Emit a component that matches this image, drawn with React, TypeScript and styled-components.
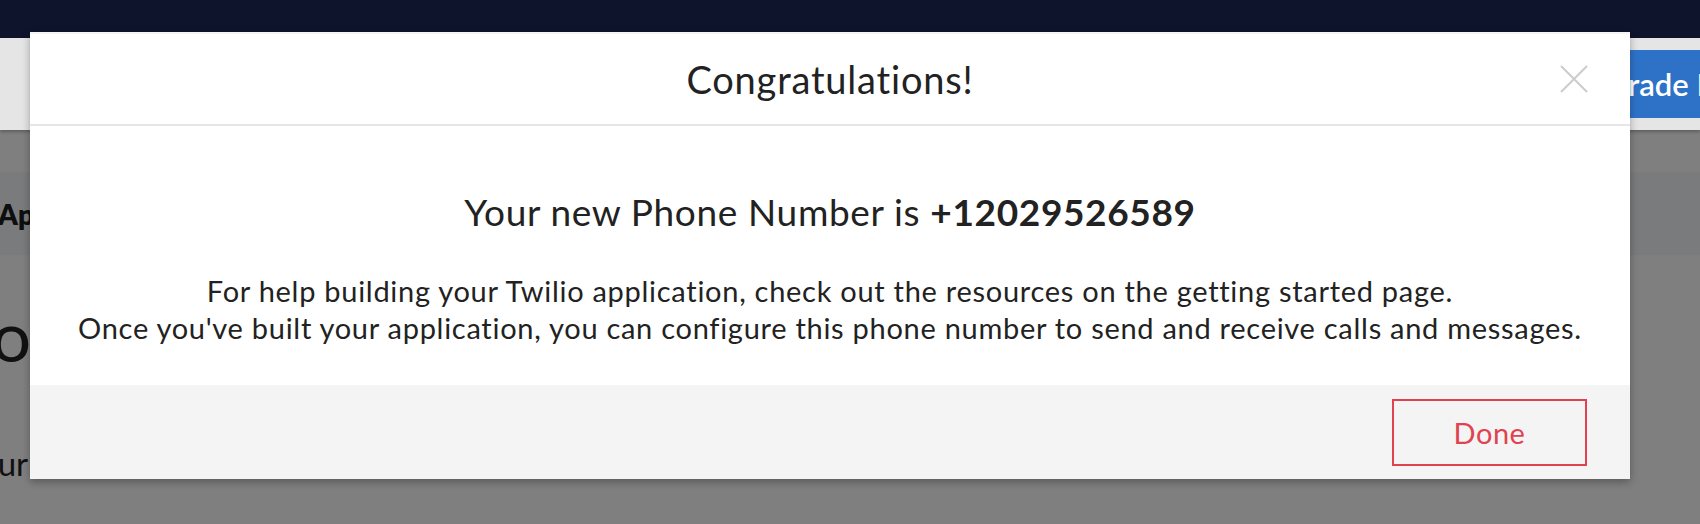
import React from "react";
import styled, { createGlobalStyle } from "styled-components";

const GlobalStyle = createGlobalStyle`
  html, body { margin: 0; padding: 0; }
  body {
    width: 1700px;
    height: 524px;
    overflow: hidden;
    background: #808080;
    font-family: Lato, "Open Sans", sans-serif;
  }
  * { box-sizing: border-box; }
`;

const Page = styled.div`
  position: relative;
  width: 1700px;
  height: 524px;
  overflow: hidden;
  display: flex;
  flex-direction: column;
  background: #ffffff;
`;

const TopNav = styled.div`
  height: 38px;
  flex: none;
  background: #0e142b;
`;

const Toolbar = styled.div`
  height: 92px;
  flex: none;
  background: #e5e5e5;
  display: flex;
  justify-content: flex-end;
  align-items: flex-start;
  padding-top: 12px;
  box-shadow: 0 2px 3px rgba(0, 0, 0, 0.25);
  position: relative;
  z-index: 1;
`;

const UpgradeButton = styled.button`
  height: 68px;
  margin-right: -116px;
  padding: 0 22px;
  border: none;
  border-radius: 2px;
  background: #2e72c8;
  color: #ffffff;
  font-family: Lato, "Open Sans", sans-serif;
  font-size: 31px;
  font-weight: 600;
  white-space: nowrap;
`;

const Content = styled.div`
  position: relative;
  flex: 1;
  display: flex;
  flex-direction: column;
  padding-top: 42px;
  background: #ffffff;
  color: #222222;
`;

const Overlay = styled.div`
  position: absolute;
  inset: 0;
  background: rgba(0, 0, 0, 0.5);
`;

const SubNav = styled.div`
  height: 83px;
  background: #f2f6fa;
  display: flex;
  align-items: center;
  font-size: 28px;
  font-weight: 800;
  color: #1c1c1c;
`;

const SubNavItem = styled.span`
  margin-left: -2px;
`;

const PageTitle = styled.h1`
  margin: 38px 0 0;
  font-size: 70px;
  font-weight: 400;
  line-height: 84px;
  text-indent: -42px;
  white-space: nowrap;
`;

const Intro = styled.p`
  margin: 66px 0 0;
  font-size: 33px;
  line-height: 40px;
  text-indent: -38px;
  white-space: nowrap;
`;

const Modal = styled.div`
  position: absolute;
  top: 32px;
  left: 30px;
  width: 1600px;
  display: flex;
  flex-direction: column;
  background: #ffffff;
  border-top: 2px solid #f4f4f4;
  box-shadow: 0 3px 8px rgba(0, 0, 0, 0.3);
  color: #222222;
  z-index: 2;
`;

const ModalHeader = styled.div`
  height: 92px;
  display: grid;
  grid-template-columns: 1fr auto 1fr;
  align-items: center;
  border-bottom: 2px solid #e6e6e6;
`;

const ModalTitle = styled.h2`
  grid-column: 2;
  margin: 0;
  font-size: 38px;
  font-weight: 400;
  line-height: 46px;
  letter-spacing: 0.8px;
  color: #222222;
`;

const CloseButton = styled.button`
  grid-column: 3;
  justify-self: end;
  margin-right: 42px;
  width: 28px;
  height: 28px;
  padding: 0;
  border: none;
  background: transparent;
  display: flex;
  align-items: center;
  justify-content: center;
  cursor: pointer;
`;

const ModalBody = styled.div`
  padding: 64px 20px 39px;
  text-align: center;
`;

const Heading = styled.div`
  font-size: 37px;
  line-height: 44px;
  letter-spacing: 0.65px;
  margin-bottom: 38px;
`;

const Strong = styled.strong`
  font-weight: 700;
`;

const BodyText = styled.p`
  margin: 0;
  font-size: 29px;
  line-height: 37px;
  letter-spacing: 0.72px;
  white-space: nowrap;
`;

const ModalFooter = styled.div`
  height: 94px;
  background: #f4f4f4;
  display: flex;
  justify-content: flex-end;
  align-items: center;
  padding-right: 43px;
`;

const DoneButton = styled.button`
  width: 195px;
  height: 67px;
  border: 2px solid #e0434f;
  background: transparent;
  color: #e0434f;
  font-family: Lato, "Open Sans", sans-serif;
  font-size: 29px;
  font-weight: 400;
  letter-spacing: 0.5px;
  cursor: pointer;
`;

const CloseIcon = () => (
  <svg width="28" height="28" viewBox="0 0 28 28" fill="none">
    <path d="M1 1L27 27M27 1L1 27" stroke="#cccccc" strokeWidth="2" />
  </svg>
);

export default function App() {
  return (
    <>
      <GlobalStyle />
      <Page>
        <TopNav />
        <Toolbar>
          <UpgradeButton>Upgrade Project</UpgradeButton>
        </Toolbar>
        <Content>
          <SubNav>
            <SubNavItem>Apps</SubNavItem>
          </SubNav>
          <PageTitle>Logs</PageTitle>
          <Intro>Your account</Intro>
          <Overlay />
        </Content>
        <Modal>
          <ModalHeader>
            <ModalTitle>Congratulations!</ModalTitle>
            <CloseButton aria-label="Close">
              <CloseIcon />
            </CloseButton>
          </ModalHeader>
          <ModalBody>
            <Heading>
              Your new Phone Number is <Strong>+12029526589</Strong>
            </Heading>
            <BodyText>
              For help building your Twilio application, check out the resources on the getting started page.
            </BodyText>
            <BodyText>
              Once you've built your application, you can configure this phone number to send and receive calls and messages.
            </BodyText>
          </ModalBody>
          <ModalFooter>
            <DoneButton>Done</DoneButton>
          </ModalFooter>
        </Modal>
      </Page>
    </>
  );
}
